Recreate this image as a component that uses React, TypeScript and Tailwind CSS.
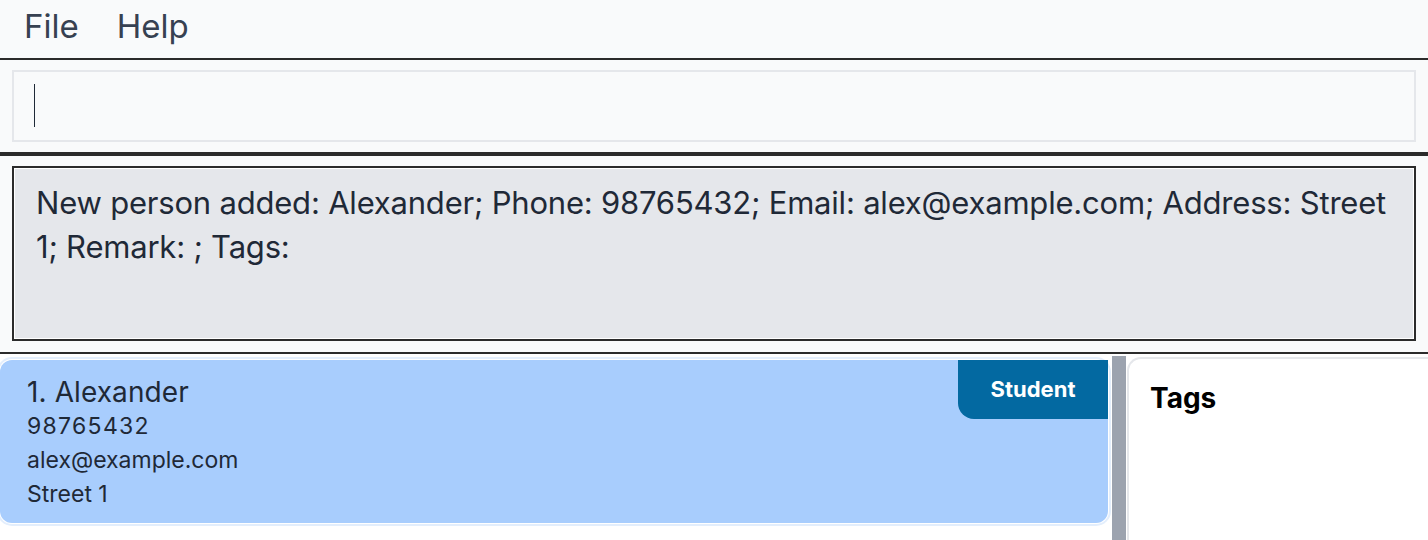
import React from 'react';

const message =
  'New person added: Alexander; Phone: 98765432; Email: alex@example.com; Address: Street 1; Remark: ; Tags:';

const PersonCard: React.FC = () => {
  return (
    <div className="relative h-[163px] rounded-[12px] bg-[#a8cdfd] shadow-[0_0_0_1px_#ffffff,0_0_0_3px_#e3eefc] pl-[27px] pt-[15px] text-[#1f2937]">
      <div className="text-[28px] leading-[34px] tracking-[0.1px]">1. Alexander</div>
      <div className="text-[23px] leading-[34px] tracking-[1.3px]">98765432</div>
      <div className="text-[23px] leading-[34px]">alex@example.com</div>
      <div className="text-[23px] leading-[34px]">Street 1</div>
      <div className="absolute top-0 right-0 flex h-[59px] w-[150px] items-center justify-center rounded-bl-[16px] bg-[#0369a1] text-[22px] font-bold text-white">
        Student
      </div>
    </div>
  );
};

export default function App() {
  return (
    <div className="flex h-[540px] w-[1428px] flex-col overflow-hidden bg-[#f9fafb] font-['Inter','Liberation_Sans',sans-serif]">
      {/* menu bar */}
      <div className="flex h-[60px] shrink-0 items-center gap-[38px] border-b-2 border-[#2b2b2b] px-[24px] pb-[4px] text-[33px] text-[#374151]">
        <span>File</span>
        <span>Help</span>
      </div>

      {/* command box */}
      <div className="h-[96px] shrink-0 border-b-4 border-[#2b2b2b] px-[12px] pt-[10px]">
        <div className="h-[72px] border-2 border-[#e5e7eb] bg-[#f9fafb] pl-[20px] pt-[12px]">
          <div className="h-[43px] w-px bg-[#1f2937]" />
        </div>
      </div>

      {/* result display */}
      <div className="h-[198px] shrink-0 border-b-2 border-[#2b2b2b] px-[12px] pt-[10px]">
        <div className="h-[175px] border-2 border-[#2b2b2b] bg-white p-px">
          <div className="h-full bg-[#e5e7eb] pl-[21px] pr-[21px] pt-[12px] text-[31px] leading-[44px] tracking-[-0.2px] text-[#1f2937]">
            {message}
          </div>
        </div>
      </div>

      {/* list + tags */}
      <div className="flex min-h-0 flex-1 bg-white">
        <div className="w-[1112px] pt-[6px] pr-[4px]">
          <PersonCard />
        </div>
        <div className="mt-[2px] w-[14px] bg-[#9ca3af]" />
        <div className="ml-px mt-[3px] flex-1 rounded-tl-[14px] border-l-2 border-t-2 border-[#e5e7eb] bg-white pl-[21px] pt-[22px]">
          <div className="text-[28px] font-bold leading-[34px] text-black">Tags</div>
        </div>
      </div>
    </div>
  );
}
